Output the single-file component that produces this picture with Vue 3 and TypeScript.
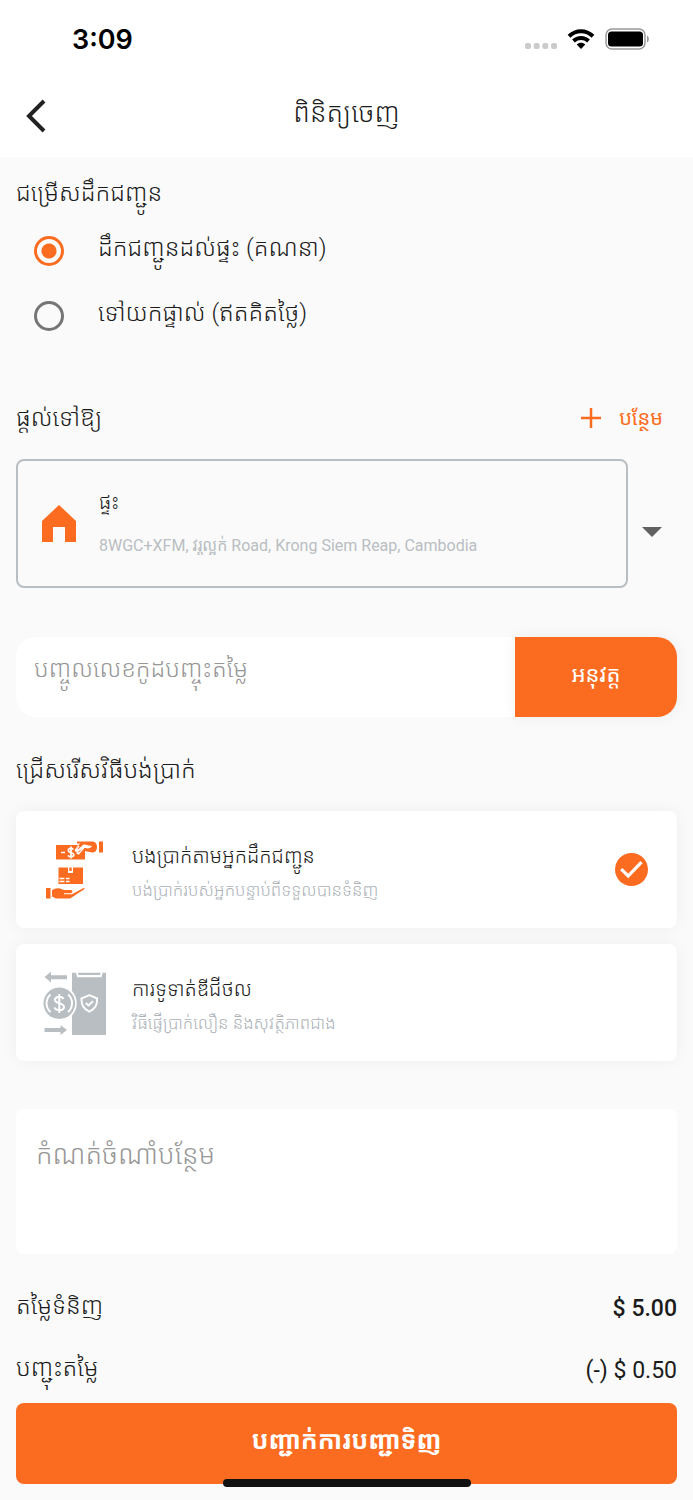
<script setup lang="ts">
import { ref } from 'vue'

type Delivery = 'home' | 'pickup'
type Payment = 'cash' | 'digital'

const deliveryOptions: { value: Delivery; label: string }[] = [
  { value: 'home', label: 'ដឹកជញ្ជូនដល់ផ្ទះ (គណនា)' },
  { value: 'pickup', label: 'ទៅយកផ្ទាល់ (ឥតគិតថ្លៃ)' },
]

const paymentOptions: { value: Payment; title: string; detail: string }[] = [
  {
    value: 'cash',
    title: 'បងប្រាក់តាមអ្នកដឹកជញ្ជូន',
    detail: 'បង់ប្រាក់របស់អ្នកបន្ទាប់ពីទទួលបានទំនិញ',
  },
  {
    value: 'digital',
    title: 'ការទូទាត់ឌីជីថល',
    detail: 'វិធីផ្ញើប្រាក់លឿន និងសុវត្ថិភាពជាង',
  },
]

const delivery = ref<Delivery>('home')
const payment = ref<Payment>('cash')
const coupon = ref('')
const note = ref('')
</script>

<template>
  <div class="page">
    <div class="status">
      <span class="clock">3:09</span>
      <div class="indicators">
        <svg class="dots" width="32" height="6" viewBox="0 0 32 6" fill="#cbcbcb" aria-hidden="true">
          <rect x="0" width="6" height="6" rx="2" />
          <rect x="8.7" width="6" height="6" rx="2" />
          <rect x="17.3" width="6" height="6" rx="2" />
          <rect x="26" width="6" height="6" rx="2" />
        </svg>
        <svg width="28" height="20" viewBox="0 0 28 20" aria-hidden="true">
          <path d="M2 7.200C9 .5 19 .5 26 7.200M6.500 12c4.300-4 10.700-4 15 0" fill="none" stroke="#000" stroke-width="4" />
          <path d="M14 20l-4.300-4.500c2.500-2.200 6.100-2.200 8.600 0z" />
        </svg>
        <svg width="44" height="22" viewBox="0 0 44 22" aria-hidden="true">
          <rect x="1" y="1" width="39" height="20" rx="6" fill="none" stroke="#999" stroke-width="1.500" />
          <rect x="3" y="3.500" width="35" height="15" rx="3.500" />
          <path d="M42 7.500c2.500 1.200 2.500 5.800 0 7z" fill="#999" />
        </svg>
      </div>
    </div>

    <header class="header">
      <button class="back" type="button" aria-label="ត្រឡប់">
        <svg width="24" height="34" viewBox="0 0 24 34" fill="none" stroke="#222" stroke-width="4" aria-hidden="true">
          <path d="M20 2L5 17l15 15" />
        </svg>
      </button>
      <h1>ពិនិត្យចេញ</h1>
    </header>

    <main class="content">
      <fieldset class="delivery">
        <legend class="heading">ជម្រើសដឹកជញ្ជូន</legend>
        <label v-for="o in deliveryOptions" :key="o.value" class="option">
          <input v-model="delivery" type="radio" name="delivery" :value="o.value" />
          <span>{{ o.label }}</span>
        </label>
      </fieldset>

      <section class="ship">
        <div class="ship-head">
          <h2 class="heading">ផ្តល់ទៅឱ្យ</h2>
          <button class="add" type="button">
            <svg width="20" height="20" viewBox="0 0 20 20" stroke="#fc6c20" stroke-width="2.500" aria-hidden="true">
              <path d="M10 0v20M0 10h20" />
            </svg>
            <span>បន្ថែម</span>
          </button>
        </div>
        <button class="picker" type="button" aria-haspopup="listbox">
          <span class="address">
            <svg width="34" height="38" viewBox="0 0 34 38" fill="#fc6c20" aria-hidden="true">
              <path d="M0 37V16L17 0l17 16V37H23V22H11v15z" />
            </svg>
            <span class="address-text">
              <span class="address-name">ផ្ទះ</span>
              <span class="address-line">8WGC+XFM, វរ្តល្អក់ Road, Krong Siem Reap, Cambodia</span>
            </span>
          </span>
          <svg class="caret" width="20" height="10" viewBox="0 0 20 10" fill="#616161" aria-hidden="true">
            <path d="M0 0h20L10 10z" />
          </svg>
        </button>
      </section>

      <form class="coupon" @submit.prevent>
        <input v-model="coupon" type="text" placeholder="បញ្ចូលលេខកូដបញ្ចុះតម្លៃ" aria-label="បញ្ចូលលេខកូដបញ្ចុះតម្លៃ" />
        <button type="submit">អនុវត្ត</button>
      </form>

      <fieldset class="payments">
        <legend class="heading">ជ្រើសរើសវិធីបង់ប្រាក់</legend>
        <label v-for="p in paymentOptions" :key="p.value" class="card">
          <svg v-if="p.value === 'cash'" width="64" height="64" viewBox="0 0 64 64" fill="#fc6c20" aria-hidden="true">
            <path d="M13 7h22l-3 4.500c-.8 2 1.200 3 2.700 1.800L38 11l4 1v9.500H13z" />
            <path d="M34 5.800V3.500h15c3.500 0 5 2.500 5 5.500s-1.500 5.500-4.500 5.500L44 13.500l-4-1-4.500 5-1.500-1 7-7.500c2.500 2 5 1 6.500-1.500-3 .5-4-1.500-7-1l-5.500 5-1.800-1.200 4-5z" />
            <rect x="56" y="3.500" width="4" height="11" />
            <path d="M18 14.500h4M33.500 15h3" stroke="#fff" stroke-width="1.600" />
            <path d="M30.300 11.500c-1-2-5-1.500-5 .8 0 3.200 5.500 1.700 5.500 4.500 0 2.300-4.600 2.600-5.800.5M28 8.500v12" fill="none" stroke="#fff" stroke-width="1.700" />
            <path d="M42 8.500l-6.500 7.500-1.500-1M36 8l-3 4.500 1.500 1L41 8.500c3 2 6 1 7.500-.5" fill="none" stroke="#fff" stroke-width="1.300" />
            <path d="M15.500 29.500H25V35h5v-5.500h10V46H15.500z" />
            <path d="M26.300 29.500h2.400v3.500h-2.400z" />
            <path d="M16.500 40.500h5M23 40.500h3.500M16.500 43.500h5M23 43.500h3.500" stroke="#fff" stroke-width="1.300" />
            <rect x="3" y="50" width="4.500" height="10.500" />
            <path d="M9 52.500c2-2 5-2.500 8-2l4 1.500h7c2 0 2 3.200-.5 3.200H21v1h8L40.500 50c1-.3 1.500.7.700 1.300L29 59.300c-1 .8-2 1.200-3 1.200H13L9 58.500z" />
          </svg>
          <svg v-else width="64" height="64" viewBox="0 0 64 64" fill="#b9bec2" aria-hidden="true">
            <path d="M1.500 6L8 .8v3.400h16v4H8v3.300zM24 59l-6.500-5v3h-16v4h16v3z" />
            <path d="M29 1.700h4l1.200 4.500h24.300l1.200-4.500H63V64H29V44.500a18.300 18.300 0 0 0 0-24.500z" />
            <path d="M35 1.700h22.500l-.6 2.300H35.600z" />
            <circle cx="16.300" cy="32.300" r="15.800" />
            <path d="M7.500 23.500c-5.300 5-5.300 12.600 0 17.600M25.100 23.500c5.300 5 5.300 12.600 0 17.600" fill="none" stroke="#fff" stroke-width="1.900" />
            <path d="M20.500 28c-1.500-3.500-8.500-3-8.500 .8 0 4.600 9 2.600 9 7.200 0 4-8 4.300-9.500 .5M16.300 23v19" fill="none" stroke="#fff" stroke-width="2" />
            <path d="M46.300 24.200l7.900 3.300c0 6.500-1.500 9.500-7.900 13.200-6.400-3.700-7.900-6.700-7.900-13.200z" fill="none" stroke="#fff" stroke-width="1.900" />
            <path d="M42.800 32l2.700 2.500 4.500-4.300" fill="none" stroke="#fff" stroke-width="2" />
          </svg>
          <span class="card-text">
            <span class="card-title">{{ p.title }}</span>
            <span class="card-detail">{{ p.detail }}</span>
          </span>
          <svg v-if="payment === p.value" width="33" height="33" viewBox="0 0 33 33" aria-hidden="true">
            <circle cx="16.500" cy="16.500" r="16.500" fill="#fc6c20" />
            <path d="M6.200 16.200l7 6.800L26.500 9.200" fill="none" stroke="#fff" stroke-width="3.200" />
          </svg>
          <input v-model="payment" type="radio" name="payment" :value="p.value" />
        </label>
      </fieldset>

      <textarea v-model="note" class="note" placeholder="កំណត់ចំណាំបន្ថែម" aria-label="កំណត់ចំណាំបន្ថែម"></textarea>

      <dl class="totals">
        <div class="total">
          <dt>តម្លៃទំនិញ</dt>
          <dd class="strong">$ 5.00</dd>
        </div>
        <div class="total">
          <dt>បញ្ជុះតម្លៃ</dt>
          <dd>(-) $ 0.50</dd>
        </div>
      </dl>
    </main>

    <footer class="footer">
      <button class="confirm" type="button">បញ្ជាក់ការបញ្ជាទិញ</button>
      <div class="home-bar"></div>
    </footer>
  </div>
</template>

<style>
body {
  margin: 0;
  background: #fafafa;
}
</style>

<style scoped>
.page {
  box-sizing: border-box;
  min-height: 100vh;
  display: flex;
  flex-direction: column;
  background: #fafafa;
  color: #1c1c1c;
  font-family: Roboto, "Noto Sans Khmer", "Khmer OS", sans-serif;
  font-size: 24px;
  font-weight: 300;
}
button,
input,
textarea {
  font: inherit;
  color: inherit;
}
button {
  padding: 0;
  border: 0;
  background: none;
  cursor: pointer;
}
fieldset {
  margin: 0;
  padding: 0;
  border: 0;
  min-width: 0;
}
legend {
  padding: 0;
}
svg {
  flex: none;
  display: block;
}
.status {
  display: flex;
  align-items: center;
  justify-content: space-between;
  height: 78px;
  padding: 0 44px 0 72px;
  background: #fff;
}
.clock {
  color: #000;
  font-family: Inter, sans-serif;
  font-size: 27px;
  font-weight: 600;
}
.indicators {
  display: flex;
  align-items: center;
  gap: 10px;
}
.dots {
  margin-top: 14px;
}
.header {
  box-sizing: border-box;
  display: grid;
  grid-template-columns: 32px 1fr 32px;
  align-items: center;
  height: 79px;
  padding: 0 24px 4px;
  background: #fff;
}
h1 {
  margin: 0;
  padding-bottom: 6px;
  font-size: 27px;
  font-weight: 300;
  line-height: 40px;
  text-align: center;
}
.content {
  padding: 0 16px;
}
.heading {
  margin: 0;
  font-size: 24px;
  font-weight: 300;
  line-height: 40px;
}
.delivery {
  padding-top: 5px;
}
.delivery .heading {
  padding-top: 16px;
}
.option {
  display: flex;
  align-items: center;
  gap: 34px;
  height: 65px;
  padding-left: 18px;
  cursor: pointer;
}
.option span {
  padding-bottom: 8px;
}
.option input {
  appearance: none;
  flex: none;
  width: 30px;
  height: 30px;
  margin: 0;
  border: 3px solid #757575;
  border-radius: 50%;
}
.option input:checked {
  border-color: #fc6c20;
  background: radial-gradient(circle, #fc6c20 7px, transparent 8px);
}
.ship {
  padding-top: 50px;
}
.ship-head {
  display: flex;
  align-items: center;
  justify-content: space-between;
  padding-right: 14px;
}
.add {
  display: flex;
  align-items: center;
  gap: 18px;
  color: #fc6c20;
  font-size: 20px;
  font-weight: 400;
  line-height: 40px;
}
.picker {
  display: flex;
  align-items: center;
  gap: 14px;
  width: 100%;
  margin-top: 21px;
  padding-right: 15px;
  text-align: left;
}
.address {
  box-sizing: border-box;
  flex: 1;
  min-width: 0;
  display: flex;
  align-items: center;
  gap: 23px;
  height: 129px;
  padding: 0 24px;
  border: 2px solid #b9bec2;
  border-radius: 8px;
}
.address-text {
  display: flex;
  flex-direction: column;
  gap: 12px;
}
.address-name {
  font-size: 20px;
  line-height: 32px;
}
.address-line {
  color: #b9bec2;
  font-size: 16px;
  font-weight: 400;
  line-height: 32px;
}
.caret {
  margin-top: 16px;
}
.coupon {
  display: flex;
  height: 80px;
  margin-top: 49px;
  border-radius: 20px;
  background: #fff;
}
.coupon input {
  box-sizing: border-box;
  flex: 1;
  min-width: 0;
  padding: 0 18px 16px;
  border: 0;
  background: none;
  line-height: 56px;
}
.coupon input::placeholder,
.note::placeholder {
  color: #979797;
  opacity: 1;
}
.coupon input::placeholder {
  overflow: visible;
  line-height: 56px;
}
.coupon button {
  width: 162px;
  padding-bottom: 8px;
  border-radius: 0 20px 20px 0;
  background: #fc6c20;
  box-shadow: 0 0 16px rgb(0 0 0 / 6%);
  color: #fff;
  font-size: 22px;
  font-weight: 400;
}
.payments .heading {
  padding: 33px 0 21px;
}
.card {
  box-sizing: border-box;
  position: relative;
  display: flex;
  align-items: center;
  gap: 25px;
  height: 117px;
  margin-bottom: 16px;
  padding: 0 29px 0 27px;
  border-radius: 8px;
  background: #fff;
  box-shadow: 0 0 16px rgb(0 0 0 / 5%);
  cursor: pointer;
}
.card input {
  position: absolute;
  inset: 0;
  width: 100%;
  height: 100%;
  margin: 0;
  opacity: 0;
  cursor: pointer;
}
.card-text {
  flex: 1;
  min-width: 0;
  display: flex;
  flex-direction: column;
  padding-top: 5px;
}
.card-title {
  font-size: 20px;
  line-height: 36px;
}
.card-detail {
  color: #adb3b8;
  font-size: 17px;
  line-height: 32px;
}
.note {
  box-sizing: border-box;
  display: block;
  width: 100%;
  height: 145px;
  margin-top: 48px;
  padding: 26px 20px;
  border: 0;
  border-radius: 8px;
  background: #fff;
  font-size: 27px;
  line-height: 40px;
  resize: none;
}
.payments .card:last-child {
  margin-bottom: 0;
}
.totals {
  margin: 23px 0 0;
}
.total {
  display: flex;
  align-items: center;
  justify-content: space-between;
  height: 62px;
}
.total dt {
  padding-bottom: 8px;
}
.total dd {
  margin: 0;
  font-size: 23px;
  font-weight: 400;
}
.total .strong {
  font-weight: 500;
}
.footer {
  position: relative;
  margin-top: auto;
  padding: 0 16px 16px;
}
.confirm {
  display: block;
  width: 100%;
  height: 81px;
  padding-bottom: 10px;
  border-radius: 8px;
  background: #fc6c20;
  color: #fff;
  font-size: 25px;
  font-weight: 700;
}
.home-bar {
  position: absolute;
  bottom: 13px;
  left: 50%;
  width: 248px;
  height: 8px;
  margin-left: -124px;
  border-radius: 4px;
  background: #111;
}
</style>
